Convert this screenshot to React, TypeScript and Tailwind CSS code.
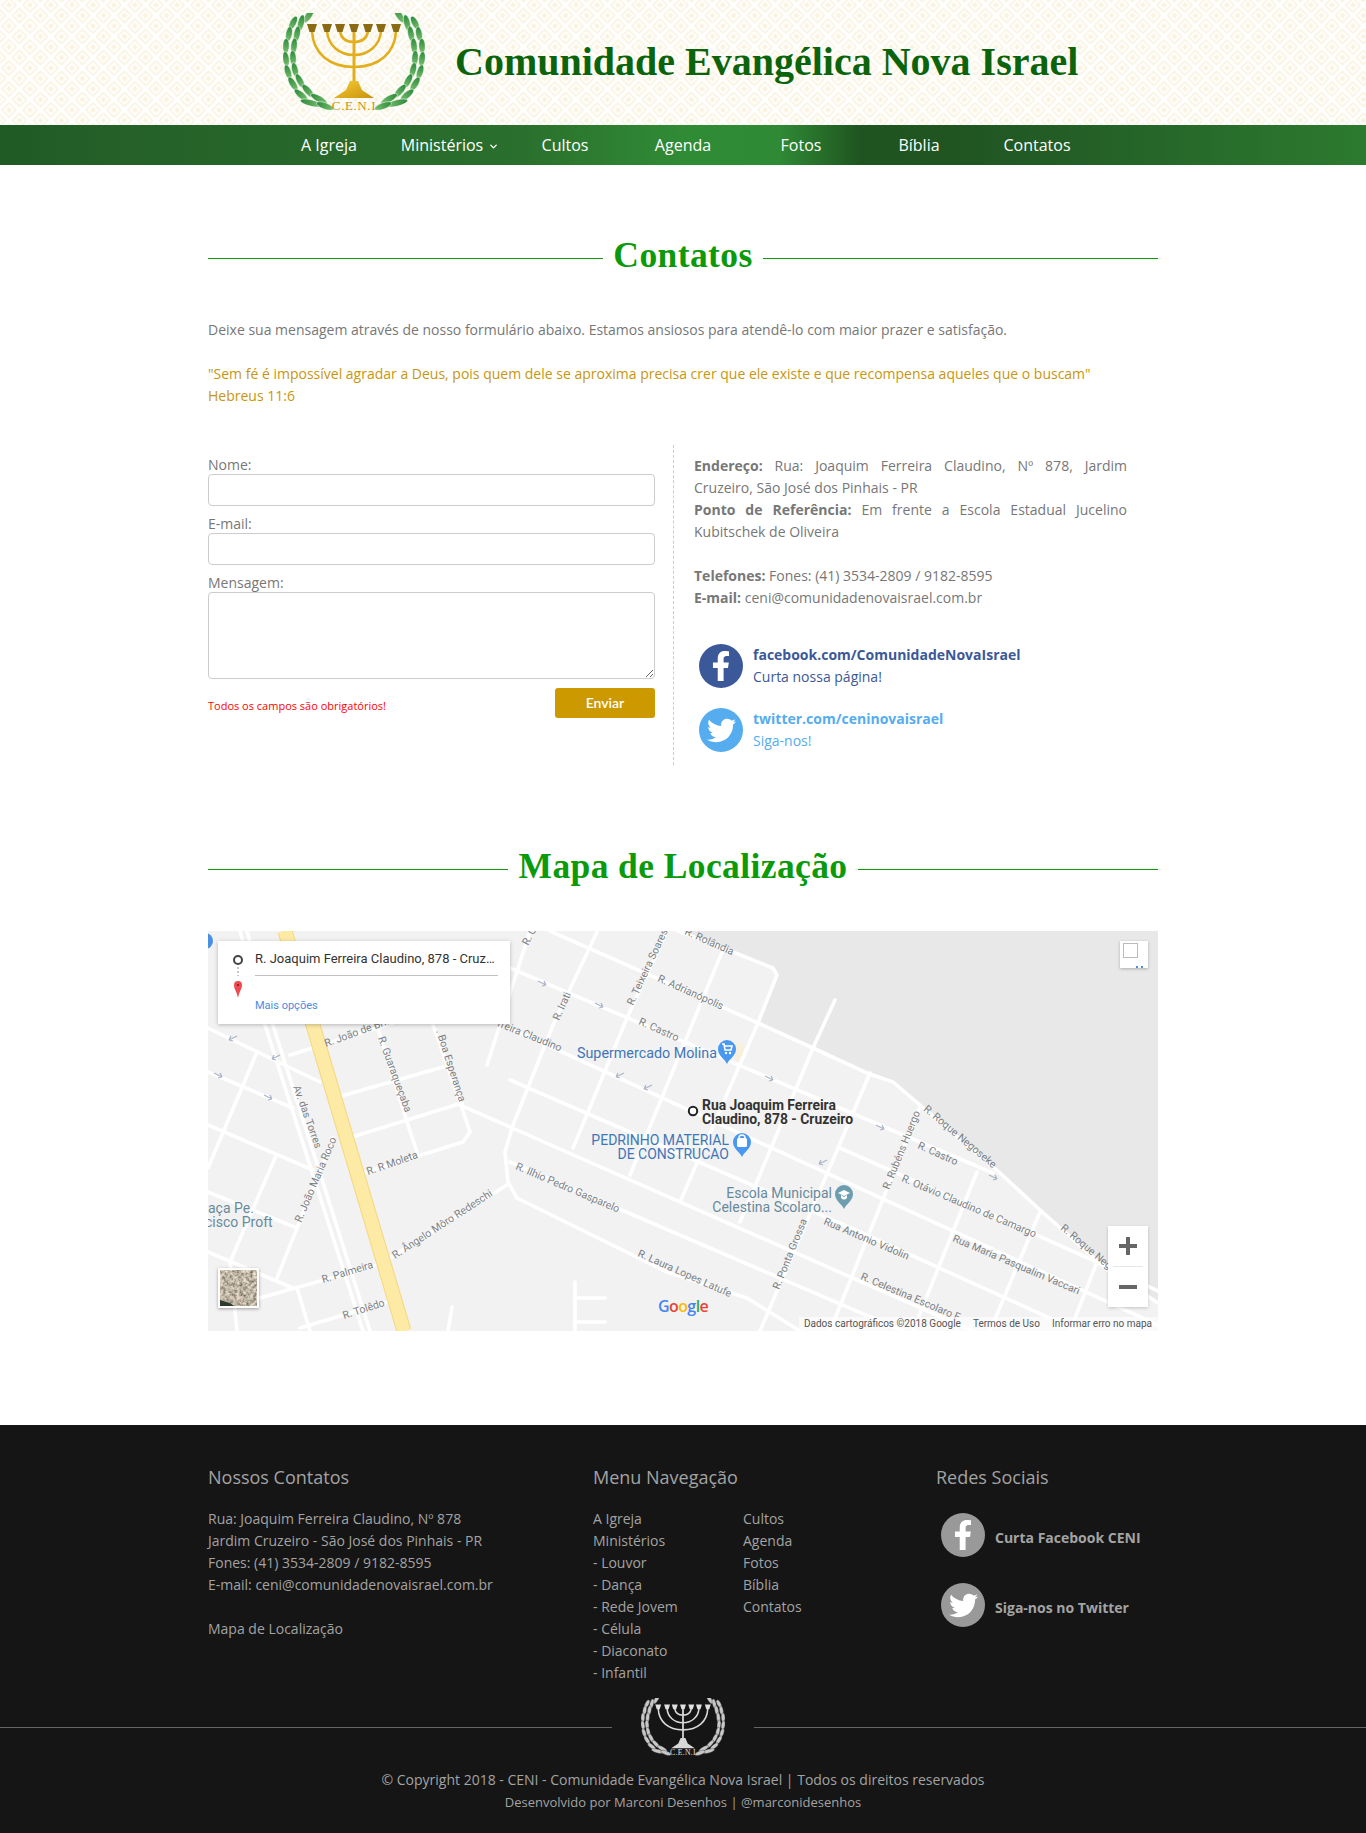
import { ChevronDown } from 'lucide-react';
import { FaFacebookF, FaTwitter } from 'react-icons/fa';

const NAV = ['A Igreja', 'Ministérios', 'Cultos', 'Agenda', 'Fotos', 'Bíblia', 'Contatos'];
const MENU_LEFT = ['A Igreja', 'Ministérios', '- Louvor', '- Dança', '- Rede Jovem', '- Célula', '- Diaconato', '- Infantil'];
const MENU_RIGHT = ['Cultos', 'Agenda', 'Fotos', 'Bíblia', 'Contatos'];

// x, y, angle, length of each laurel leaf, left branch
const LEAVES = [
  [26, 2, 122, 18], [18, 10, 104, 17], [10, 10, 118, 15], [14, 21, 100, 16], [6, 21, 100, 15], [11, 33, 96, 16], [3, 33, 92, 15],
  [10, 45, 86, 15], [3, 46, 82, 15], [12, 57, 76, 15], [5, 59, 72, 15], [17, 68, 62, 16], [10, 71, 58, 16], [25, 78, 48, 17],
  [18, 82, 40, 17], [36, 86, 30, 19], [28, 90, 14, 22], [42, 93, 20, 18],
];

const ROADS: number[][] = [
  [470, 0, 515, 17, 565, 37, 569, 44, 550, 92], [342, 0, 550, 92, 605, 117, 659, 142, 685, 151, 712, 174, 792, 242, 832, 279, 902, 341, 950, 372],
  [302, 37, 785, 242], [280, 87, 950, 394], [632, 217, 889, 331, 950, 360], [302, 149, 650, 300, 870, 400], [252, 174, 765, 400], [302, 231, 695, 400],
  [309, 267, 459, 341, 539, 367, 592, 400], [322, 0, 279, 134], [389, 1, 345, 94, 305, 194, 297, 221, 300, 251, 309, 267], [459, 0, 419, 87, 365, 217],
  [514, 21, 422, 244], [550, 92, 472, 271], [605, 117, 532, 291], [627, 69, 605, 117], [662, 142, 552, 400], [712, 176, 622, 400], [769, 241, 705, 400],
  [832, 281, 782, 400], [889, 331, 862, 400], [32, 0, 57, 94, 155, 400], [39, 0, 65, 94, 162, 400], [0, 97, 112, 151], [0, 141, 85, 177], [0, 194, 105, 239],
  [0, 261, 89, 297], [0, 321, 85, 357], [49, 121, 0, 237], [67, 227, 22, 331], [125, 207, 69, 347], [82, 124, 185, 92], [130, 166, 235, 136], [144, 206, 254, 172],
  [155, 242, 255, 211, 262, 201, 252, 171, 225, 94], [169, 94, 199, 191, 209, 221], [182, 327, 299, 254], [52, 367, 169, 334], [92, 397, 179, 371], [89, 357, 102, 400],
  [22, 331, 29, 400], [367, 351, 367, 400], [367, 367, 397, 367], [367, 391, 397, 391], [244, 376, 240, 400],
];

const ROAD_LABELS: [string, number, number, number][] = [
  ['R. Rolândia', 476, 3, 24], ['R. Adrianópolis', 449, 50, 24], ['R. Teixeira Soares', 425, 75, -65], ['R. Castro', 430, 93, 24], ['R. Irati', 351, 90, -66],
  ['R. G', 320, 15, -62], ['rreira Claudino', 289, 95, 22], ['R. João de Brito', 118, 116, -20], ['R. Guaraqueçaba', 170, 107, 70], ['. Boa Esperança', 228, 100, 72],
  ['Av. das Torres', 85, 156, 70], ['R. R Moleta', 160, 244, -19], ['R. João Maria Roco', 93, 292, -67], ['R. Ângelo Môro Redeschi', 187, 328, -33],
  ['R. Ilhio Pedro Gasparelo', 307, 238, 23], ['R. Laura Lopes Latufe', 429, 325, 24], ['R. Palmeira', 115, 352, -17], ['R. Tolêdo', 136, 388, -18],
  ['R. Rubéns Huergo', 681, 259, -68], ['R. Roque Negoseke', 715, 179, 40], ['R. Castro', 709, 217, 24], ['R. Otávio Claudino de Camargo', 693, 250, 23],
  ['R. Roque Nego', 852, 298, 40], ['Rua Maria Pasqualim Vaccari', 744, 310, 23], ['Rua Antonio Vidolin', 615, 293, 23], ['R. Celestina Escolaro F', 652, 348, 23],
  ['R. Ponta Grossa', 571, 359, -68],
];

// x, y, direction of the one-way arrows on the map
const ARROWS = [
  [334, 52, 1], [391, 74, 1], [412, 144, -1], [440, 156, -1], [25, 107, -1], [68, 126, -1], [10, 144, 1], [60, 166, 1], [561, 147, 1], [672, 196, 1], [615, 231, -1], [785, 246, 1],
];

function Logo({ mono, className }: { mono?: boolean; className: string }) {
  const gold = mono ? '#d8d8d8' : 'url(#goldFill)';
  const stem = mono ? '#d8d8d8' : '#e2ae1c';
  const leaf = mono ? '#c8c8c8' : 'url(#leafFill)';
  const branch = LEAVES.map(([x, y, a, l], i) => (
    <ellipse key={i} cx={x} cy={y} rx={l / 2} ry={3.2} fill={leaf} stroke={mono ? '#151515' : '#ffffff'} strokeWidth={0.5} transform={`rotate(${a} ${x} ${y})`} />
  ));
  return (
    <svg viewBox="0 0 142 100" className={className}>
      {!mono && (
        <defs>
          <linearGradient id="goldFill" x1="0" y1="0" x2="1" y2="1">
            <stop offset="0" stopColor="#f7cb33" />
            <stop offset="1" stopColor="#c9920f" />
          </linearGradient>
          <linearGradient id="leafFill" x1="0" y1="0" x2="1" y2="0">
            <stop offset="0" stopColor="#2a8a3a" />
            <stop offset="1" stopColor="#7cc070" />
          </linearGradient>
        </defs>
      )}
      <g>{branch}</g>
      <g transform="translate(142 0) scale(-1 1)">{branch}</g>
      <g fill="none" stroke={stem} strokeWidth={2.6}>
        <path d="M29 18 C30 40 46 54 71 54 C96 54 112 40 113 18" />
        <path d="M44 18 C45 32 56 42 71 42 C86 42 97 32 98 18" />
        <path d="M57 18 C58 25 63 29 71 29 C79 29 84 25 85 18" />
        <path d="M71 16 V78" strokeWidth={3} />
      </g>
      {[29, 44, 57, 71, 85, 98, 113].map(x => (
        <path key={x} d={`M${x - 5} 11 H${x + 5} L${x + 2.5} 19 H${x - 2.5} Z`} fill={mono ? '#e0e0e0' : '#8a6a12'} />
      ))}
      <path d="M67 68 H75 L79 77 L91 85 H51 L63 77 Z" fill={gold} />
      <text x="71" y="97" textAnchor="middle" fontSize="13" letterSpacing="0.6" fontFamily="'Liberation Serif', serif" fill={mono ? '#e0e0e0' : '#c8960c'}>C.E.N.I</text>
    </svg>
  );
}

function SectionTitle({ children }: { children: string }) {
  return (
    <div className="flex h-[50px] items-center gap-[10px]">
      <div className="h-px flex-1 bg-[#0a9a0a]" />
      <h2 className="-mt-[6px] font-['Liberation_Serif',serif] text-[35.5px] leading-[50px] font-bold tracking-[0.4px] text-[#0a9a0a]">{children}</h2>
      <div className="h-px flex-1 bg-[#0a9a0a]" />
    </div>
  );
}

function Pin({ x, y, fill, children }: { x: number; y: number; fill: string; children?: React.ReactNode }) {
  return (
    <g transform={`translate(${x} ${y})`}>
      <path d="M0 14 C-2 9 -9 6 -9 -1 A9 9 0 1 1 9 -1 C9 6 2 9 0 14 Z" fill={fill} />
      {children}
    </g>
  );
}

function MapBlock() {
  return (
    <div className="relative h-[400px] overflow-hidden bg-[#f2f2f2]">
      <svg viewBox="0 0 950 400" className="block h-[400px] w-[950px] font-['Roboto',sans-serif]">
        <path d="M470 0 L515 17 L565 37 L569 44 L550 92 L605 117 L659 142 L685 151 L712 174 L792 242 L832 279 L902 341 L950 372 V0 Z" fill="#e8e8e8" />
        <rect x="527" y="112" width="8" height="18" fill="#f8f0dd" />
        <g fill="none" stroke="#ffffff" strokeWidth={3.6} strokeLinecap="round" strokeLinejoin="round">
          {ROADS.map((r, i) => (
            <polyline key={i} points={r.join(' ')} />
          ))}
        </g>
        <path d="M77 0 L196 400" stroke="#f5d77f" strokeWidth={15} />
        <path d="M77 0 L196 400" stroke="#fdeaa5" strokeWidth={13} />
        <circle cx="-3" cy="10" r="8" fill="#4a90e2" />
        {ARROWS.map(([x, y, d], i) => (
          <path key={i} d={`M${x - 4 * d} ${y - 2} L${x + 4 * d} ${y + 2} M${x + 4 * d} ${y + 2} L${x} ${y + 3} M${x + 4 * d} ${y + 2} L${x + 2 * d} ${y - 2}`} stroke="#aab4c8" strokeWidth={1.2} fill="none" />
        ))}
        <g fontSize="10.5" fill="#7b7f84">
          {ROAD_LABELS.map(([t, x, y, a], i) => (
            <text key={i} x={x} y={y} transform={`rotate(${a} ${x} ${y})`}>{t}</text>
          ))}
        </g>
        <g fontSize="14" fill="#3f76b9">
          <text x="369" y="127" fontSize="14.3">Supermercado Molina</text>
          <text x="521" y="214" textAnchor="end">PEDRINHO MATERIAL</text>
          <text x="521" y="228" textAnchor="end">DE CONSTRUCAO</text>
        </g>
        <g fontSize="14" fill="#678a9c">
          <text x="624" y="267" textAnchor="end">Escola Municipal</text>
          <text x="624" y="281" textAnchor="end">Celestina Scolaro...</text>
          <text x="0" y="282">aça Pe.</text>
          <text x="-3" y="296">cisco Proft</text>
        </g>
        <g fontSize="13.9" fontWeight="700" fill="#333333">
          <text x="494" y="179">Rua Joaquim Ferreira</text>
          <text x="494" y="193">Claudino, 878 - Cruzeiro</text>
        </g>
        <circle cx="485" cy="180" r="4.2" fill="#ffffff" stroke="#222222" strokeWidth={2} />
        <Pin x={519} y={119} fill="#4a98f0">
          <path d="M-5 -6 H-3 L-2 0 H4 L5 -4 H-3" stroke="#ffffff" strokeWidth={1.6} fill="none" />
          <circle cx="-1" cy="3" r="1.2" fill="#ffffff" />
          <circle cx="3" cy="3" r="1.2" fill="#ffffff" />
        </Pin>
        <Pin x={534} y={212} fill="#4a98f0">
          <rect x="-5" y="-5" width="10" height="9" rx="1.5" fill="#ffffff" />
          <path d="M-3 -5 A3 3 0 0 1 3 -5" stroke="#ffffff" strokeWidth={1.4} fill="none" />
        </Pin>
        <Pin x={636} y={264} fill="#6d9eb0">
          <path d="M-6 -2 L0 -5 L6 -2 L0 1 Z" fill="#ffffff" />
          <path d="M-3 0 V3 C-1 5 1 5 3 3 V0 L0 2 Z" fill="#ffffff" />
        </Pin>
        <text x="450" y="381" fontSize="16" fontWeight="600" fontFamily="'Open Sans', sans-serif" letterSpacing="-0.6">
          <tspan fill="#4285f4">G</tspan>
          <tspan fill="#ea4335">o</tspan>
          <tspan fill="#fbbc05">o</tspan>
          <tspan fill="#4285f4">g</tspan>
          <tspan fill="#34a853">l</tspan>
          <tspan fill="#ea4335">e</tspan>
        </text>
      </svg>

      <div className="absolute top-[10px] left-[10px] h-[83px] w-[292px] bg-white font-['Roboto',sans-serif] shadow-[0_1px_4px_rgba(0,0,0,0.25)]">
        <svg viewBox="0 0 30 83" className="absolute top-0 left-0 h-[83px] w-[30px]">
          <circle cx="20" cy="19" r="4" fill="none" stroke="#444444" strokeWidth={2} />
          <path d="M20 26 V35" stroke="#c8c8c8" strokeWidth={2} strokeDasharray="2 2" />
          <path d="M20 57 C19 51 16 48 16 44 A4 4 0 0 1 24 44 C24 48 21 51 20 57 Z" fill="#ef4a4f" />
          <circle cx="20" cy="44" r="1" fill="#7a1015" />
        </svg>
        <div className="ml-[37px] w-[243px]">
          <p className="truncate pt-[9px] text-[13px] leading-[18px] text-[#333333]">R. Joaquim Ferreira Claudino, 878 - Cruzeiro, São José</p>
          <div className="mt-[7px] h-px bg-[#c0c0c0]" />
          <p className="mt-[23px] text-[11px] leading-[14px] text-[#4a8ce0]">Mais opções</p>
        </div>
      </div>

      <div className="absolute top-[10px] right-[10px] h-[27px] w-[28px] bg-white shadow-[0_1px_3px_rgba(0,0,0,0.25)]">
        <div className="mt-[2px] ml-[3px] h-[15px] w-[15px] border border-[#bbbbbb]" />
        <div className="absolute right-[5px] bottom-0 flex gap-[3px]">
          <div className="h-[2px] w-[2px] bg-[#4a8ce0]" />
          <div className="h-[2px] w-[2px] bg-[#4a8ce0]" />
        </div>
      </div>

      <div className="absolute top-[295px] right-[10px] flex h-[81px] w-[40px] flex-col items-center bg-white shadow-[0_1px_3px_rgba(0,0,0,0.2)]">
        <svg viewBox="0 0 40 40" className="h-[40px] w-[40px]">
          <path d="M20 11 V29 M11 20 H29" stroke="#666666" strokeWidth={4} />
        </svg>
        <div className="h-px w-[30px] bg-[#e6e6e6]" />
        <svg viewBox="0 0 40 40" className="h-[40px] w-[40px]">
          <path d="M11 20 H29" stroke="#666666" strokeWidth={4} />
        </svg>
      </div>

      <div className="absolute top-[337px] left-[10px] h-[40px] w-[41px] border-2 border-white shadow-[0_1px_3px_rgba(0,0,0,0.35)]">
        <svg viewBox="0 0 37 36" className="block h-full w-full">
          <filter id="sat" x="0" y="0" width="100%" height="100%">
            <feTurbulence type="fractalNoise" baseFrequency="0.3" numOctaves="3" seed="7" />
            <feColorMatrix values="1.3 0 0 0 -0.13  1.1 0.1 0 0 -0.14  0.9 0.1 0 0 -0.13  0 0 0 0 1" />
          </filter>
          <rect width="37" height="36" filter="url(#sat)" />
          <path d="M0 30 L10 33 L14 36 H0 Z" fill="#2e3a2c" />
        </svg>
      </div>

      <div className="absolute right-0 bottom-0 flex h-[14px] items-center gap-[12px] bg-white/60 pr-[6px] pl-[5px] font-['Roboto',sans-serif] text-[10px] leading-[14px] text-[#555555]">
        <span>Dados cartográficos ©2018 Google</span>
        <span>Termos de Uso</span>
        <span>Informar erro no mapa</span>
      </div>
    </div>
  );
}

export default function App() {
  return (
    <div className="font-['Open_Sans',sans-serif] text-[14px] leading-[22px] text-[#777777]">
      <header className="h-[125px] overflow-hidden bg-white">
        <div className="relative h-[125px]">
          <svg className="absolute inset-0 h-full w-full">
            <pattern id="diamonds" width="21" height="21" patternUnits="userSpaceOnUse" x="19.5" y="-5.5">
              {[[10.5, 10.5], [0, 0], [21, 0], [0, 21], [21, 21]].map(([cx, cy]) => (
                <g key={`${cx}-${cy}`} transform={`translate(${cx} ${cy})`} fill="#f9f2de">
                  <path d="M0 -7 L7 0 L0 7 L-7 0 Z" fill="none" stroke="#f9f2de" strokeWidth={1.6} />
                  <path d="M0 -3 L3 0 L0 3 L-3 0 Z" />
                </g>
              ))}
            </pattern>
            <rect width="100%" height="100%" fill="url(#diamonds)" />
          </svg>
          <div className="relative mx-auto flex w-[950px] items-center pt-[13px] pl-[75px]">
            <Logo className="h-[100px] w-[142px] shrink-0" />
            <h1 className="-mt-[3px] ml-[30px] font-['Liberation_Serif',serif] text-[40px] leading-[50px] font-bold whitespace-nowrap text-[#0b640b]">
              Comunidade Evangélica Nova Israel
            </h1>
          </div>
        </div>
      </header>

      <nav className="flex h-[40px] justify-center bg-[linear-gradient(90deg,#1f5a24_0%,#246028_8%,#2a6f2d_38%,#308b35_50%,#2f8a35_57%,#1f5420_63%,#205422_70%,#2c7a30_100%)]">
        {NAV.map(item => (
          <a key={item} className={`flex w-[118px] items-center justify-center gap-[5px] text-[16px] leading-[40px] text-white ${item === 'Ministérios' ? 'pl-[6px]' : ''}`}>
            {item}
            {item === 'Ministérios' && <ChevronDown size={11} strokeWidth={3} className="mt-[2px]" />}
          </a>
        ))}
      </nav>

      <main className="mx-auto w-[950px]">
        <div className="pt-[68px]">
          <SectionTitle>Contatos</SectionTitle>
        </div>
        <p className="mt-[36px]">Deixe sua mensagem através de nosso formulário abaixo. Estamos ansiosos para atendê-lo com maior prazer e satisfação.</p>
        <p className="mt-[22px] text-[#c8960c]">
          "Sem fé é impossível agradar a Deus, pois quem dele se aproxima precisa crer que ele existe e que recompensa aqueles que o buscam"
          <br />
          Hebreus 11:6
        </p>

        <div className="mt-[38px] flex h-[320px]">
          <form className="w-[447px] pt-[10px]">
            <label className="block leading-[19px]">Nome:</label>
            <input className="block h-[32px] w-full rounded-[4px] border border-[#cccccc]" />
            <label className="mt-[8px] block leading-[19px]">E-mail:</label>
            <input className="block h-[32px] w-full rounded-[4px] border border-[#cccccc]" />
            <label className="mt-[8px] block leading-[19px]">Mensagem:</label>
            <textarea className="block h-[87px] w-full rounded-[4px] border border-[#cccccc]" />
            <div className="mt-[9px] flex items-center justify-between">
              <span className="mt-[5px] text-[11px] text-[#ff0000]">Todos os campos são obrigatórios!</span>
              <button type="button" className="h-[30px] w-[100px] rounded-[3px] bg-[#cc9900] font-['Lato',sans-serif] text-[14px] font-semibold text-white">
                Enviar
              </button>
            </div>
          </form>

          <div className="ml-[18px] w-[485px] border-l border-dashed border-[#cccccc] pt-[10px] pr-[31px] pl-[20px]">
            <p className="text-justify">
              <b>Endereço:</b> Rua: Joaquim Ferreira Claudino, Nº 878, Jardim Cruzeiro, São José dos Pinhais - PR
            </p>
            <p className="text-justify">
              <b>Ponto de Referência:</b> Em frente a Escola Estadual Jucelino Kubitschek de Oliveira
            </p>
            <p className="mt-[22px]">
              <b>Telefones:</b> Fones: (41) 3534-2809 / 9182-8595
            </p>
            <p>
              <b>E-mail:</b> ceni@comunidadenovaisrael.com.br
            </p>
            <div className="mt-[35px] ml-[5px] flex gap-[10px] text-[#3b5998]">
              <div className="flex h-[44px] w-[44px] items-center justify-center rounded-full bg-[#3b5998]">
                <FaFacebookF size={30} className="text-white" />
              </div>
              <div>
                <b className="block">facebook.com/ComunidadeNovaIsrael</b>
                Curta nossa página!
              </div>
            </div>
            <div className="mt-[20px] ml-[5px] flex gap-[10px] text-[#55acee]">
              <div className="flex h-[44px] w-[44px] items-center justify-center rounded-full bg-[#55acee]">
                <FaTwitter size={29} className="text-white" />
              </div>
              <div>
                <b className="block">twitter.com/ceninovaisrael</b>
                Siga-nos!
              </div>
            </div>
          </div>
        </div>

        <div className="mt-[79px]">
          <SectionTitle>Mapa de Localização</SectionTitle>
        </div>
        <div className="mt-[37px]">
          <MapBlock />
        </div>
      </main>

      <footer className="mt-[94px] h-[408px] bg-[#151515] text-[#a3a3a3]">
        <div className="mx-auto grid w-[950px] grid-cols-[385px_343px_222px] pt-[39px]">
          <div>
            <h3 className="text-[18px] leading-[26px]">Nossos Contatos</h3>
            <p className="mt-[18px]">Rua: Joaquim Ferreira Claudino, Nº 878</p>
            <p>Jardim Cruzeiro - São José dos Pinhais - PR</p>
            <p>Fones: (41) 3534-2809 / 9182-8595</p>
            <p>E-mail: ceni@comunidadenovaisrael.com.br</p>
            <p className="mt-[22px]">Mapa de Localização</p>
          </div>
          <div>
            <h3 className="text-[18px] leading-[26px]">Menu Navegação</h3>
            <div className="mt-[18px] grid grid-cols-[150px_1fr]">
              <div>
                {MENU_LEFT.map(m => (
                  <p key={m}>{m}</p>
                ))}
              </div>
              <div>
                {MENU_RIGHT.map(m => (
                  <p key={m}>{m}</p>
                ))}
              </div>
            </div>
          </div>
          <div>
            <h3 className="text-[18px] leading-[26px]">Redes Sociais</h3>
            <div className="mt-[23px] ml-[5px] flex h-[44px] items-center gap-[10px] font-bold">
              <div className="flex h-[44px] w-[44px] items-center justify-center rounded-full bg-[#999999]">
                <FaFacebookF size={30} className="text-white" />
              </div>
              <span className="mt-[5px]">Curta Facebook CENI</span>
            </div>
            <div className="mt-[26px] ml-[5px] flex h-[44px] items-center gap-[10px] font-bold">
              <div className="flex h-[44px] w-[44px] items-center justify-center rounded-full bg-[#999999]">
                <FaTwitter size={29} className="text-white" />
              </div>
              <span className="mt-[5px]">Siga-nos no Twitter</span>
            </div>
          </div>
        </div>

        <div className="mt-[14px] flex h-[59px] items-center">
          <div className="h-px flex-1 bg-[#666666]" />
          <div className="flex w-[142px] justify-center">
            <Logo mono className="h-[59px] w-[84px]" />
          </div>
          <div className="h-px flex-1 bg-[#666666]" />
        </div>
        <p className="mt-[12px] text-center">© Copyright 2018 - CENI - Comunidade Evangélica Nova Israel | Todos os direitos reservados</p>
        <p className="text-center text-[13px]">Desenvolvido por Marconi Desenhos | @marconidesenhos</p>
      </footer>
    </div>
  );
}
